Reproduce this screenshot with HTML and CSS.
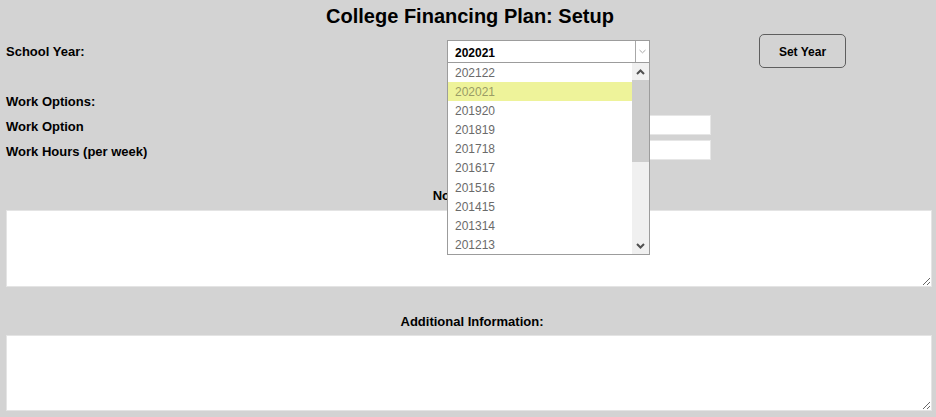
FILE: index.html
```html
<!DOCTYPE html>
<html>
<head>
<meta charset="utf-8">
<title>College Financing Plan: Setup</title>
<link rel="stylesheet" href="styles.css">
</head>
<body>
<div class="page">
  <h1 class="title">College Financing Plan: Setup</h1>

  <div class="row row-year">
    <label class="label label-year">School Year:</label>
    <div class="select-wrap">
      <div class="select">
        <span class="select-value">202021</span>
        <span class="select-arrow">
          <svg width="7" height="5" viewBox="0 0 7 5"><polyline points="0.5,1 3.5,3.8 6.5,1" fill="none" stroke="#a8a8a8" stroke-width="1"/></svg>
        </span>
      </div>
      <div class="dropdown">
        <ul class="options">
          <li>202122</li>
          <li class="active">202021</li>
          <li>201920</li>
          <li>201819</li>
          <li>201718</li>
          <li>201617</li>
          <li>201516</li>
          <li>201415</li>
          <li>201314</li>
          <li>201213</li>
        </ul>
        <div class="scrollbar">
          <div class="sb-btn">
            <svg width="9" height="6" viewBox="0 0 9 6"><polyline points="1,5 4.5,1.5 8,5" fill="none" stroke="#505050" stroke-width="2"/></svg>
          </div>
          <div class="sb-thumb"></div>
          <div class="sb-track"></div>
          <div class="sb-btn">
            <svg width="9" height="6" viewBox="0 0 9 6"><polyline points="1,1 4.5,4.5 8,1" fill="none" stroke="#505050" stroke-width="2"/></svg>
          </div>
        </div>
      </div>
    </div>
    <button class="btn">Set Year</button>
  </div>

  <div class="row row-section">
    <label class="label">Work Options:</label>
  </div>
  <div class="row row-field">
    <label class="label label-field">Work Option</label>
    <input class="input" type="text">
  </div>
  <div class="row row-field">
    <label class="label label-field">Work Hours (per week)</label>
    <input class="input" type="text">
  </div>

  <div class="block block-notes">
    <label class="label label-center">Notes/Other:</label>
    <textarea class="area area-notes"></textarea>
  </div>

  <div class="block block-info">
    <label class="label label-center">Additional Information:</label>
    <textarea class="area area-info"></textarea>
  </div>
</div>
</body>
</html>
```

FILE: styles.css
```css
* { box-sizing: border-box; }

html, body {
  margin: 0;
  padding: 0;
  background: #d3d3d3;
}

body {
  font-family: "Liberation Sans", Arial, sans-serif;
  color: #000;
  overflow: hidden;
}

.page {
  padding: 0 4px 0 6px;
  height: 417px;
}

.title {
  margin: 0;
  height: 32px;
  font-size: 20px;
  line-height: 32px;
  font-weight: bold;
  text-align: center;
  padding-left: 2px;
}

.row {
  display: flex;
  align-items: flex-start;
}

.label {
  display: block;
  font-size: 13px;
  line-height: 16px;
  font-weight: bold;
  width: 441px;
  flex: none;
}

.row-year {
  margin-top: 2px;
  height: 36px;
}

.label-year {
  margin-top: 10px;
}

.select-wrap {
  position: relative;
  margin-top: 6px;
  width: 203px;
  flex: none;
  z-index: 5;
}

.select {
  height: 23px;
  border: 1px solid #9c9c9c;
  background: #fff;
  display: flex;
}

.select-value {
  flex: 1;
  font-size: 12px;
  font-weight: bold;
  line-height: 21px;
  padding: 2px 0 0 7px;
}

.select-arrow {
  width: 14px;
  border-left: 1px solid #a8a8a8;
  display: flex;
  align-items: center;
  justify-content: center;
  padding-bottom: 1px;
}

.dropdown {
  position: absolute;
  left: 0;
  top: 23px;
  width: 203px;
  height: 192px;
  background: #fff;
  border: 1px solid #9c9c9c;
  border-top: none;
  display: flex;
}

.options {
  list-style: none;
  margin: 0;
  padding: 0;
  flex: 1;
}

.options li {
  height: 19.1px;
  line-height: 19px;
  font-size: 12px;
  color: #6a6a6a;
  padding: 1px 0 0 7px;
}

.options li.active {
  background: #eef39a;
  color: #9a9c66;
}

.scrollbar {
  width: 17px;
  display: flex;
  flex-direction: column;
  background: #f0f0f0;
}

.sb-btn {
  height: 17px;
  display: flex;
  align-items: center;
  justify-content: center;
  background: #f0f0f0;
}

.sb-thumb {
  height: 82px;
  background: #cdcdcd;
}

.sb-track {
  flex: 1;
}

.btn {
  margin-left: 109px;
  width: 87px;
  height: 34px;
  border: 1px solid #5e5e5e;
  border-radius: 5px;
  background: #d3d3d3;
  font-family: "Liberation Sans", Arial, sans-serif;
  font-size: 12px;
  font-weight: bold;
  color: #000;
  padding: 2px 0 0 0;
}

.row-section {
  margin-top: 24px;
  height: 16px;
}

.row-field {
  margin-top: 5px;
  height: 20px;
}

.label-field {
  margin-top: 4px;
}

.input {
  width: 264px;
  height: 20px;
  border: 1px solid #e6e6e6;
  background: #fff;
  margin: 0;
  padding: 0;
  outline: none;
}

.block {
  display: flex;
  flex-direction: column;
}

.label-center {
  width: auto;
  text-align: center;
  padding-left: 6px;
}

.block-notes {
  margin-top: 28px;
}

.area {
  display: block;
  width: 926px;
  margin: 0;
  border: 1px solid #e4e4e4;
  background: #fff;
  resize: both;
  outline: none;
  font-family: "Liberation Sans", Arial, sans-serif;
}

.area-notes {
  margin-top: 6px;
  height: 77px;
}

.block-info {
  margin-top: 27px;
}

.area-info {
  margin-top: 5px;
  height: 76px;
}
```
